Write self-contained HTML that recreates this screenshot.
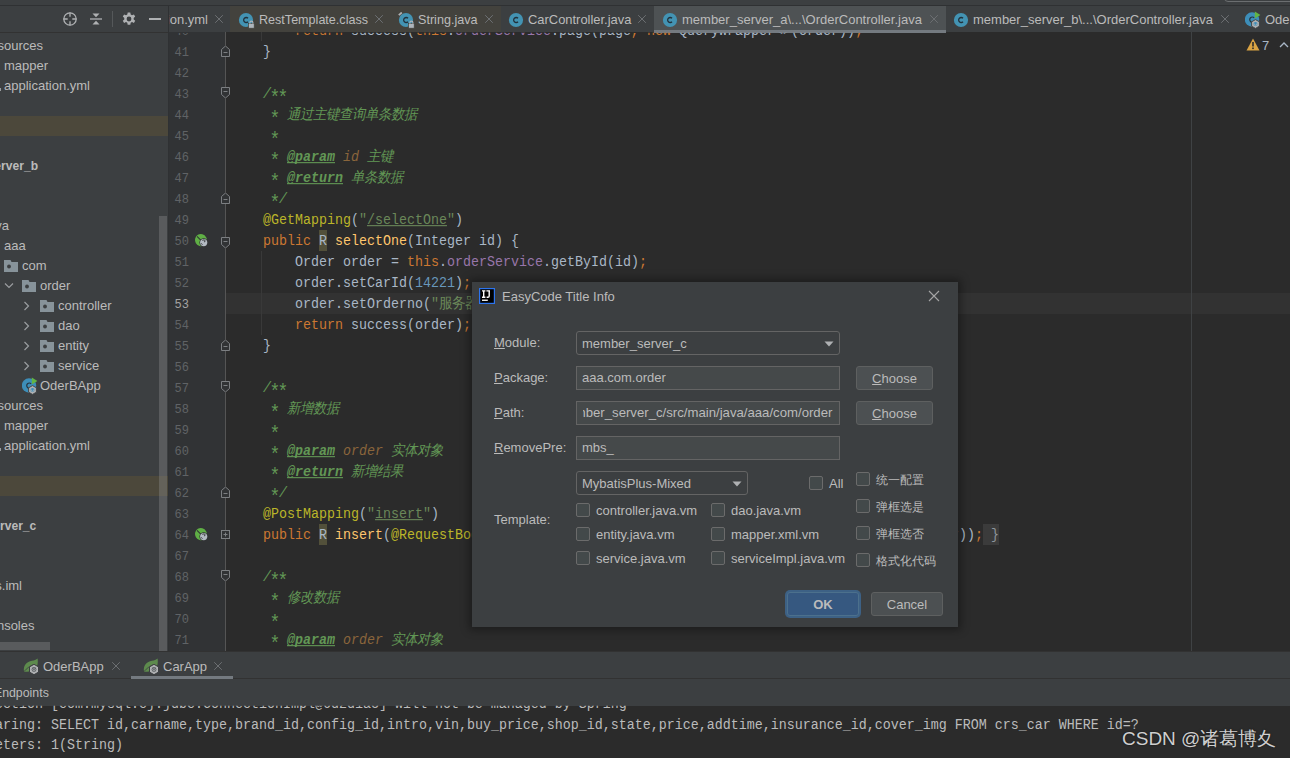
<!DOCTYPE html>
<html><head><meta charset="utf-8">
<style>
*{box-sizing:border-box}
html,body{margin:0;padding:0}
body{width:1290px;height:758px;overflow:hidden;position:relative;background:#3C3F41;font-family:"Liberation Sans",sans-serif;font-size:13px;color:#BBBBBB}
.a{position:absolute;display:block}
.t{position:absolute;white-space:pre;line-height:1}
.code{font-family:"Liberation Mono",monospace;font-size:13.333px;color:#A9B7C6;transform:scaleY(1.1);transform-origin:0 10px}
.kw{color:#CC7832}
.an{color:#BBB529}
.st{color:#6A8759}
.nu{color:#6897BB}
.fd{color:#9876AA}
.md{color:#FFC66D}
.dc{color:#629755;font-style:italic}
.tag{color:#629755;font-weight:bold;font-style:italic;text-decoration:underline;text-decoration-skip-ink:none}
.ast{display:inline-block;width:8px;text-align:center;transform:translateY(4px) scale(1.35);font-style:normal}
.pn{color:#8A653B;font-style:italic}
.ln{position:absolute;left:168px;width:21px;text-align:right;font-family:"Liberation Mono",monospace;font-size:12px;color:#606366;white-space:pre;line-height:1}
u{text-decoration:underline}
</style></head><body>
<div class="a" style="left:0px;top:0px;width:1290px;height:5px;background:#3C3F41;"></div>
<div class="a" style="left:0px;top:5px;width:1290px;height:1px;background:#2F3133;"></div>
<div class="a" style="left:0px;top:6px;width:168px;height:645px;background:#3C3F41;"></div>
<div class="a" style="left:0px;top:32px;width:168px;height:1px;background:#323232;"></div>
<svg class="a" style="left:61px;top:10px;" width="18" height="18" viewBox="0 0 18 18"><circle cx="9" cy="9" r="6.2" fill="none" stroke="#AFB1B3" stroke-width="1.3"/><path d="M9 2.5v4.2M9 11.3v4.2M2.5 9h4.2M11.3 9h4.2" stroke="#AFB1B3" stroke-width="1.3"/></svg>
<svg class="a" style="left:88px;top:11px;" width="16" height="16" viewBox="0 0 16 16"><path d="M2 8h12" stroke="#AFB1B3" stroke-width="1.3"/><path d="M4.5 2.5h7L8 6.3z M4.5 13.5h7L8 9.7z" fill="#AFB1B3"/></svg>
<div class="a" style="left:112px;top:11px;width:1px;height:16px;background:#55585A;"></div>
<svg class="a" style="left:121px;top:11px;" width="16" height="16" viewBox="0 0 16 16"><path fill="#AFB1B3" fill-rule="evenodd" d="M6.7 1.5h2.6l.4 2 1.3.7 1.9-.8 1.3 2.2-1.5 1.3v1.5l1.5 1.3-1.3 2.2-1.9-.8-1.3.7-.4 2H6.7l-.4-2-1.3-.7-1.9.8-1.3-2.2 1.5-1.3V6.9L1.8 5.6l1.3-2.2 1.9.8 1.3-.7z M8 5.6a2.4 2.4 0 1 0 0 4.8a2.4 2.4 0 1 0 0-4.8z"/></svg>
<div class="a" style="left:149px;top:18px;width:12px;height:2px;background:#AFB1B3;"></div>
<div class="a" style="left:0px;top:116px;width:168px;height:20px;background:#4C483B;"></div>
<div class="a" style="left:0px;top:476px;width:168px;height:20px;background:#4C483B;"></div>
<div class="t" style="top:39px;font-size:13px;color:#BBBBBB;right:1247px;text-align:right;">resources</div>
<div class="t" style="top:59px;font-size:13px;color:#BBBBBB;left:4px;">mapper</div>
<div class="t" style="top:79px;font-size:13px;color:#BBBBBB;left:4px;">application.yml</div>
<div class="a" style="left:0px;top:88px;width:1px;height:3px;background:#9A9DA0;"></div>
<div class="t" style="top:159px;font-size:13px;color:#BBBBBB;right:1252px;text-align:right;font-weight:bold;transform:scaleX(0.93);transform-origin:right top;">member_server_b</div>
<div class="t" style="top:219px;font-size:13px;color:#BBBBBB;right:1281px;text-align:right;">java</div>
<div class="t" style="top:239px;font-size:13px;color:#BBBBBB;left:4px;">aaa</div>
<svg class="a" style="left:4px;top:260px;" width="14" height="12" viewBox="0 0 14 12"><path d="M0 0h6.5l1 2H14v10H0z" fill="#87939A"/><circle cx="5" cy="6.5" r="1.9" fill="#3C3F41"/></svg>
<div class="t" style="top:259px;font-size:13px;color:#BBBBBB;left:22px;">com</div>
<svg class="a" style="left:4px;top:282px;" width="10" height="8" viewBox="0 0 10 8"><path d="M1 1.5l4 4 4-4" fill="none" stroke="#9A9DA0" stroke-width="1.2"/></svg>
<svg class="a" style="left:22px;top:280px;" width="14" height="12" viewBox="0 0 14 12"><path d="M0 0h6.5l1 2H14v10H0z" fill="#87939A"/><circle cx="5" cy="6.5" r="1.9" fill="#3C3F41"/></svg>
<div class="t" style="top:279px;font-size:13px;color:#BBBBBB;left:40px;">order</div>
<svg class="a" style="left:23px;top:301px;" width="8" height="10" viewBox="0 0 8 10"><path d="M1.5 1l4 4-4 4" fill="none" stroke="#9A9DA0" stroke-width="1.2"/></svg>
<svg class="a" style="left:40px;top:300px;" width="14" height="12" viewBox="0 0 14 12"><path d="M0 0h6.5l1 2H14v10H0z" fill="#87939A"/><circle cx="5" cy="6.5" r="1.9" fill="#3C3F41"/></svg>
<div class="t" style="top:299px;font-size:13px;color:#BBBBBB;left:58px;">controller</div>
<svg class="a" style="left:23px;top:321px;" width="8" height="10" viewBox="0 0 8 10"><path d="M1.5 1l4 4-4 4" fill="none" stroke="#9A9DA0" stroke-width="1.2"/></svg>
<svg class="a" style="left:40px;top:320px;" width="14" height="12" viewBox="0 0 14 12"><path d="M0 0h6.5l1 2H14v10H0z" fill="#87939A"/><circle cx="5" cy="6.5" r="1.9" fill="#3C3F41"/></svg>
<div class="t" style="top:319px;font-size:13px;color:#BBBBBB;left:58px;">dao</div>
<svg class="a" style="left:23px;top:341px;" width="8" height="10" viewBox="0 0 8 10"><path d="M1.5 1l4 4-4 4" fill="none" stroke="#9A9DA0" stroke-width="1.2"/></svg>
<svg class="a" style="left:40px;top:340px;" width="14" height="12" viewBox="0 0 14 12"><path d="M0 0h6.5l1 2H14v10H0z" fill="#87939A"/><circle cx="5" cy="6.5" r="1.9" fill="#3C3F41"/></svg>
<div class="t" style="top:339px;font-size:13px;color:#BBBBBB;left:58px;">entity</div>
<svg class="a" style="left:23px;top:361px;" width="8" height="10" viewBox="0 0 8 10"><path d="M1.5 1l4 4-4 4" fill="none" stroke="#9A9DA0" stroke-width="1.2"/></svg>
<svg class="a" style="left:40px;top:360px;" width="14" height="12" viewBox="0 0 14 12"><path d="M0 0h6.5l1 2H14v10H0z" fill="#87939A"/><circle cx="5" cy="6.5" r="1.9" fill="#3C3F41"/></svg>
<div class="t" style="top:359px;font-size:13px;color:#BBBBBB;left:58px;">service</div>
<svg class="a" style="left:22px;top:377px;" width="18" height="18" viewBox="0 0 18 18"><circle cx="7" cy="8.5" r="7.2" fill="#3D8EB9"/><path d="M9.2 6.8a2.6 2.6 0 1 0 0 3.6" fill="none" stroke="#253540" stroke-width="1.2"/><path d="M9.8 0.5l5.6 3.6-5.6 3.4z" fill="#62B543"/><path d="M10.5 8.6l3.9 2.2v4.4l-3.9 2.2-3.9-2.2v-4.4z" fill="#AFB1B3" stroke="#3C3F41" stroke-width="0.9"/><circle cx="10.5" cy="13" r="2" fill="#3D8EB9"/><path d="M9.4 12.6a1.2 1.2 0 1 0 2.2 0" fill="none" stroke="#AFB1B3" stroke-width="0.8"/></svg>
<div class="t" style="top:379px;font-size:13px;color:#BBBBBB;left:40px;">OderBApp</div>
<div class="t" style="top:399px;font-size:13px;color:#BBBBBB;right:1247px;text-align:right;">resources</div>
<div class="t" style="top:419px;font-size:13px;color:#BBBBBB;left:4px;">mapper</div>
<div class="t" style="top:439px;font-size:13px;color:#BBBBBB;left:4px;">application.yml</div>
<div class="a" style="left:0px;top:448px;width:1px;height:3px;background:#9A9DA0;"></div>
<div class="t" style="top:519px;font-size:13px;color:#BBBBBB;right:1253.5px;text-align:right;font-weight:bold;transform:scaleX(0.93);transform-origin:right top;">member_server_c</div>
<div class="t" style="top:579px;font-size:13px;color:#BBBBBB;right:1268px;text-align:right;">member_servers.iml</div>
<div class="t" style="top:619px;font-size:13px;color:#BBBBBB;right:1255.5px;text-align:right;">Scratches and Consoles</div>
<div class="a" style="left:159px;top:216px;width:8px;height:435px;background:#595B5D;"></div>
<div class="a" style="left:159px;top:476px;width:8px;height:20px;background:#64625A;"></div>
<div class="a" style="left:0px;top:642px;width:50px;height:8px;background:#595B5D;"></div>
<div class="a" style="left:168px;top:32px;width:1122px;height:619px;background:#2B2B2B;"></div>
<div class="a" style="left:168px;top:32px;width:58px;height:619px;background:#313335;"></div>
<div class="a" style="left:168px;top:6px;width:1px;height:645px;background:#2F3133;"></div>
<div class="a" style="left:168px;top:6px;width:1122px;height:26px;background:#3C3F41;"></div>
<div class="a" style="left:168px;top:6px;width:1px;height:26px;background:#2F3133;"></div>
<div class="a" style="left:230px;top:6px;width:271px;height:26px;background:#43423D;"></div>
<div class="a" style="left:654px;top:6px;width:292px;height:26px;background:#4E5254;"></div>
<div class="a" style="left:654px;top:30px;width:292px;height:3px;background:#747A80;"></div>
<div class="a" style="left:169px;top:6px;width:59px;height:26px;overflow:hidden"><div class="t" style="right:20px;top:7px;color:#BBBBBB">application.yml</div></div>
<svg class="a" style="left:213px;top:13px;" width="12" height="12" viewBox="0 0 12 12"><path d="M2.2 2.2L9.8 9.8M9.8 2.2L2.2 9.8" stroke="#6C6F72" stroke-width="1"/></svg>
<svg class="a" style="left:238px;top:12px;" width="17" height="17" viewBox="0 0 17 17"><circle cx="8" cy="8" r="7.1" fill="#4393B3"/><path d="M10 6.3a2.5 2.5 0 1 0 0 3.4" fill="none" stroke="#22303A" stroke-width="1.3"/><rect x="10.6" y="11.6" width="5.6" height="4.6" fill="#AEB5BC" stroke="#43423D" stroke-width="0.7"/><path d="M11.9 11.8v-1.2a1.5 1.5 0 0 1 3 0v1.2" fill="none" stroke="#AEB5BC" stroke-width="1.1"/></svg>
<div class="t" style="top:13px;font-size:13px;color:#BBBBBB;left:259px;transform:scaleX(0.967);transform-origin:left top;">RestTemplate.class</div>
<svg class="a" style="left:373px;top:13px;" width="12" height="12" viewBox="0 0 12 12"><path d="M2.2 2.2L9.8 9.8M9.8 2.2L2.2 9.8" stroke="#6C6F72" stroke-width="1"/></svg>
<svg class="a" style="left:398px;top:12px;" width="17" height="17" viewBox="0 0 17 17"><circle cx="8" cy="8" r="7.1" fill="#4393B3"/><path d="M10 6.3a2.5 2.5 0 1 0 0 3.4" fill="none" stroke="#22303A" stroke-width="1.3"/><rect x="10.6" y="11.6" width="5.6" height="4.6" fill="#AEB5BC" stroke="#43423D" stroke-width="0.7"/><path d="M11.9 11.8v-1.2a1.5 1.5 0 0 1 3 0v1.2" fill="none" stroke="#AEB5BC" stroke-width="1.1"/><path d="M0.8 3.2l3-2.7" stroke="#AFB1B3" stroke-width="1.8"/></svg>
<div class="t" style="top:13px;font-size:13px;color:#BBBBBB;left:418px;transform:scaleX(0.97);transform-origin:left top;">String.java</div>
<svg class="a" style="left:483px;top:13px;" width="12" height="12" viewBox="0 0 12 12"><path d="M2.2 2.2L9.8 9.8M9.8 2.2L2.2 9.8" stroke="#6C6F72" stroke-width="1"/></svg>
<svg class="a" style="left:508px;top:12px;" width="17" height="17" viewBox="0 0 17 17"><circle cx="8" cy="8" r="7.1" fill="#4393B3"/><path d="M10 6.3a2.5 2.5 0 1 0 0 3.4" fill="none" stroke="#22303A" stroke-width="1.3"/></svg>
<div class="t" style="top:13px;font-size:13px;color:#BBBBBB;left:528px;transform:scaleX(0.994);transform-origin:left top;">CarController.java</div>
<svg class="a" style="left:636px;top:13px;" width="12" height="12" viewBox="0 0 12 12"><path d="M2.2 2.2L9.8 9.8M9.8 2.2L2.2 9.8" stroke="#6C6F72" stroke-width="1"/></svg>
<svg class="a" style="left:662px;top:12px;" width="17" height="17" viewBox="0 0 17 17"><circle cx="8" cy="8" r="7.1" fill="#4393B3"/><path d="M10 6.3a2.5 2.5 0 1 0 0 3.4" fill="none" stroke="#22303A" stroke-width="1.3"/></svg>
<div class="t" style="top:13px;font-size:13px;color:#BBBBBB;left:682px;">member_server_a\...\OrderController.java</div>
<svg class="a" style="left:928px;top:13px;" width="12" height="12" viewBox="0 0 12 12"><path d="M2.2 2.2L9.8 9.8M9.8 2.2L2.2 9.8" stroke="#6C6F72" stroke-width="1"/></svg>
<svg class="a" style="left:953px;top:12px;" width="17" height="17" viewBox="0 0 17 17"><circle cx="8" cy="8" r="7.1" fill="#4393B3"/><path d="M10 6.3a2.5 2.5 0 1 0 0 3.4" fill="none" stroke="#22303A" stroke-width="1.3"/></svg>
<div class="t" style="top:13px;font-size:13px;color:#BBBBBB;left:973px;">member_server_b\...\OrderController.java</div>
<svg class="a" style="left:1219px;top:13px;" width="12" height="12" viewBox="0 0 12 12"><path d="M2.2 2.2L9.8 9.8M9.8 2.2L2.2 9.8" stroke="#6C6F72" stroke-width="1"/></svg>
<svg class="a" style="left:1245px;top:11px;" width="18" height="18" viewBox="0 0 18 18"><circle cx="7" cy="8.5" r="7.2" fill="#3D8EB9"/><path d="M9.2 6.8a2.6 2.6 0 1 0 0 3.6" fill="none" stroke="#253540" stroke-width="1.2"/><path d="M9.8 0.5l5.6 3.6-5.6 3.4z" fill="#62B543"/><path d="M10.5 8.6l3.9 2.2v4.4l-3.9 2.2-3.9-2.2v-4.4z" fill="#AFB1B3" stroke="#3C3F41" stroke-width="0.9"/><circle cx="10.5" cy="13" r="2" fill="#3D8EB9"/><path d="M9.4 12.6a1.2 1.2 0 1 0 2.2 0" fill="none" stroke="#AFB1B3" stroke-width="0.8"/></svg>
<div class="t" style="top:13px;font-size:13px;color:#BBBBBB;left:1265px;">OderBApp</div>
<div class="a" style="left:1224px;top:-10px;width:80px;height:12px;border:1px solid #6B6E70;border-radius:4px"></div>
<div class="a" style="left:1191px;top:32px;width:1px;height:619px;background:#3F4244;"></div>
<svg class="a" style="left:1246px;top:38px;" width="14" height="13" viewBox="0 0 14 13"><path d="M7 0.5L13.5 12.5H0.5z" fill="#D9A343"/><rect x="6.2" y="4" width="1.6" height="4.5" fill="#2B2B2B"/><rect x="6.2" y="9.5" width="1.6" height="1.6" fill="#2B2B2B"/></svg>
<div class="t" style="top:39px;font-size:13px;color:#A9B7C6;left:1262px;">7</div>
<svg class="a" style="left:1279px;top:41px;" width="10" height="8" viewBox="0 0 10 8"><path d="M1 6l4-4 4 4" fill="none" stroke="#A9B7C6" stroke-width="1.3"/></svg>
<div class="a" style="left:226px;top:293px;width:965px;height:21px;background:#323232;"></div>
<div class="a" style="left:1192px;top:293px;width:98px;height:21px;background:#323232;"></div>
<div class="a" style="left:225px;top:32px;width:1px;height:619px;background:#555555;"></div>
<div class="a" style="left:261px;top:32px;width:1px;height:9px;background:#393939;"></div>
<div class="a" style="left:261px;top:251px;width:1px;height:84px;background:#393939;"></div>
<div class="ln" style="top:26px;color:#606366;clip-path:inset(7px 0 0 0);">40</div>
<div class="ln" style="top:47px;color:#606366;">41</div>
<div class="ln" style="top:68px;color:#606366;">42</div>
<div class="ln" style="top:89px;color:#606366;">43</div>
<div class="ln" style="top:110px;color:#606366;">44</div>
<div class="ln" style="top:131px;color:#606366;">45</div>
<div class="ln" style="top:152px;color:#606366;">46</div>
<div class="ln" style="top:173px;color:#606366;">47</div>
<div class="ln" style="top:194px;color:#606366;">48</div>
<div class="ln" style="top:215px;color:#606366;">49</div>
<div class="ln" style="top:236px;color:#606366;">50</div>
<div class="ln" style="top:257px;color:#606366;">51</div>
<div class="ln" style="top:278px;color:#606366;">52</div>
<div class="ln" style="top:299px;color:#A4A3A3;">53</div>
<div class="ln" style="top:320px;color:#606366;">54</div>
<div class="ln" style="top:341px;color:#606366;">55</div>
<div class="ln" style="top:362px;color:#606366;">56</div>
<div class="ln" style="top:383px;color:#606366;">57</div>
<div class="ln" style="top:404px;color:#606366;">58</div>
<div class="ln" style="top:425px;color:#606366;">59</div>
<div class="ln" style="top:446px;color:#606366;">60</div>
<div class="ln" style="top:467px;color:#606366;">61</div>
<div class="ln" style="top:488px;color:#606366;">62</div>
<div class="ln" style="top:509px;color:#606366;">63</div>
<div class="ln" style="top:530px;color:#606366;">64</div>
<div class="ln" style="top:551px;color:#606366;">67</div>
<div class="ln" style="top:572px;color:#606366;">68</div>
<div class="ln" style="top:593px;color:#606366;">69</div>
<div class="ln" style="top:614px;color:#606366;">70</div>
<div class="ln" style="top:635px;color:#606366;">71</div>
<svg class="a" style="left:221px;top:46px;" width="9" height="11" viewBox="0 0 9 11"><path d="M0.5 10.5h8v-7l-4-3.5-4 3.5z" fill="#313335" stroke="#7C7F82"/><path d="M2.5 6.5h4" stroke="#7C7F82"/></svg>
<svg class="a" style="left:221px;top:87px;" width="9" height="11" viewBox="0 0 9 11"><path d="M0.5 0.5h8v7l-4 3.5-4-3.5z" fill="#313335" stroke="#7C7F82"/><path d="M2.5 4.5h4" stroke="#7C7F82"/></svg>
<svg class="a" style="left:221px;top:193px;" width="9" height="11" viewBox="0 0 9 11"><path d="M0.5 10.5h8v-7l-4-3.5-4 3.5z" fill="#313335" stroke="#7C7F82"/><path d="M2.5 6.5h4" stroke="#7C7F82"/></svg>
<svg class="a" style="left:221px;top:237px;" width="9" height="11" viewBox="0 0 9 11"><path d="M0.5 0.5h8v7l-4 3.5-4-3.5z" fill="#313335" stroke="#7C7F82"/><path d="M2.5 4.5h4" stroke="#7C7F82"/></svg>
<svg class="a" style="left:221px;top:340px;" width="9" height="11" viewBox="0 0 9 11"><path d="M0.5 10.5h8v-7l-4-3.5-4 3.5z" fill="#313335" stroke="#7C7F82"/><path d="M2.5 6.5h4" stroke="#7C7F82"/></svg>
<svg class="a" style="left:221px;top:381px;" width="9" height="11" viewBox="0 0 9 11"><path d="M0.5 0.5h8v7l-4 3.5-4-3.5z" fill="#313335" stroke="#7C7F82"/><path d="M2.5 4.5h4" stroke="#7C7F82"/></svg>
<svg class="a" style="left:221px;top:487px;" width="9" height="11" viewBox="0 0 9 11"><path d="M0.5 10.5h8v-7l-4-3.5-4 3.5z" fill="#313335" stroke="#7C7F82"/><path d="M2.5 6.5h4" stroke="#7C7F82"/></svg>
<svg class="a" style="left:221px;top:530px;" width="9" height="11" viewBox="0 0 9 11"><rect x="0.5" y="0.5" width="8" height="8" fill="#313335" stroke="#7C7F82"/><path d="M2.5 4.5h4M4.5 2.5v4" stroke="#7C7F82"/></svg>
<svg class="a" style="left:221px;top:570px;" width="9" height="11" viewBox="0 0 9 11"><path d="M0.5 0.5h8v7l-4 3.5-4-3.5z" fill="#313335" stroke="#7C7F82"/><path d="M2.5 4.5h4" stroke="#7C7F82"/></svg>
<svg class="a" style="left:195px;top:233.5px;" width="14" height="14" viewBox="0 0 14 14"><ellipse cx="6" cy="6.2" rx="5.9" ry="6.2" fill="#5FAF45" transform="rotate(-30 6 6.2)"/><path d="M2 2.3L6 6.3" stroke="#313335" stroke-width="1.1"/><circle cx="8.7" cy="8.6" r="4.3" fill="#313335"/><circle cx="8.7" cy="8.6" r="3.6" fill="#B3BAC2"/><path d="M7.4 6.4c.9-.6 2-.5 2.7.2l-.6 1.6M6.2 9.3l1.2 1.4" fill="none" stroke="#313335" stroke-width="1"/></svg>
<svg class="a" style="left:195px;top:527.5px;" width="14" height="14" viewBox="0 0 14 14"><ellipse cx="6" cy="6.2" rx="5.9" ry="6.2" fill="#5FAF45" transform="rotate(-30 6 6.2)"/><path d="M2 2.3L6 6.3" stroke="#313335" stroke-width="1.1"/><circle cx="8.7" cy="8.6" r="4.3" fill="#313335"/><circle cx="8.7" cy="8.6" r="3.6" fill="#B3BAC2"/><path d="M7.4 6.4c.9-.6 2-.5 2.7.2l-.6 1.6M6.2 9.3l1.2 1.4" fill="none" stroke="#313335" stroke-width="1"/></svg>
<div class="t code" style="left:231px;top:25px;clip-path:inset(8px 0 0 0);">        <span class="kw">return</span> success(<span class="kw">this</span>.<span class="fd">orderService</span>.page(page<span class="kw">,</span> <span class="kw">new</span> QueryWrapper&lt;&gt;(order))<span class="kw">;</span></div>
<div class="t code" style="left:231px;top:46px;">    }</div>
<div class="t code" style="left:231px;top:88px;">    <span class="dc">/<span class="ast">*</span><span class="ast">*</span></span></div>
<div class="t code" style="left:231px;top:109px;">     <span class="dc"><span class="ast">*</span> 通过主键查询单条数据</span></div>
<div class="t code" style="left:231px;top:130px;">     <span class="dc"><span class="ast">*</span></span></div>
<div class="t code" style="left:231px;top:151px;">     <span class="dc"><span class="ast">*</span> </span><span class="tag">@param</span><span class="dc"> </span><span class="pn">id</span><span class="dc"> 主键</span></div>
<div class="t code" style="left:231px;top:172px;">     <span class="dc"><span class="ast">*</span> </span><span class="tag">@return</span><span class="dc"> 单条数据</span></div>
<div class="t code" style="left:231px;top:193px;">     <span class="dc"><span class="ast">*</span>/</span></div>
<div class="t code" style="left:231px;top:214px;">    <span class="an">@GetMapping</span>(<span class="st">"<u>/selectOne</u>"</span>)</div>
<div class="a" style="left:319px;top:230px;width:8px;height:21px;background:#52503A;"></div>
<div class="a" style="left:319px;top:524px;width:8px;height:21px;background:#52503A;"></div>
<div class="a" style="left:983px;top:524px;width:16px;height:21px;background:#3B3B3B;"></div>
<div class="t code" style="left:231px;top:235px;">    <span class="kw">public</span> <span>R</span> <span class="md">selectOne</span>(Integer id) {</div>
<div class="t code" style="left:231px;top:256px;">        Order order = <span class="kw">this</span>.<span class="fd">orderService</span>.getById(id)<span class="kw">;</span></div>
<div class="t code" style="left:231px;top:277px;">        order.setCarId(<span class="nu">14221</span>)<span class="kw">;</span></div>
<div class="t code" style="left:231px;top:298px;">        order.setOrderno(<span class="st">"服务器</span></div>
<div class="t code" style="left:231px;top:319px;">        <span class="kw">return</span> success(order)<span class="kw">;</span></div>
<div class="t code" style="left:231px;top:340px;">    }</div>
<div class="t code" style="left:231px;top:382px;">    <span class="dc">/<span class="ast">*</span><span class="ast">*</span></span></div>
<div class="t code" style="left:231px;top:403px;">     <span class="dc"><span class="ast">*</span> 新增数据</span></div>
<div class="t code" style="left:231px;top:424px;">     <span class="dc"><span class="ast">*</span></span></div>
<div class="t code" style="left:231px;top:445px;">     <span class="dc"><span class="ast">*</span> </span><span class="tag">@param</span><span class="dc"> </span><span class="pn">order</span><span class="dc"> 实体对象</span></div>
<div class="t code" style="left:231px;top:466px;">     <span class="dc"><span class="ast">*</span> </span><span class="tag">@return</span><span class="dc"> 新增结果</span></div>
<div class="t code" style="left:231px;top:487px;">     <span class="dc"><span class="ast">*</span>/</span></div>
<div class="t code" style="left:231px;top:508px;">    <span class="an">@PostMapping</span>(<span class="st">"<u>insert</u>"</span>)</div>
<div class="t code" style="left:231px;top:529px;">    <span class="kw">public</span> R <span class="md">insert</span>(<span class="an">@RequestBody</span> Order order) { <span class="kw">return</span> success(<span class="kw">this</span>.<span class="fd">orderService</span>.save(order))<span class="kw">;</span> <span style="color:#8E969C">}</span></div>
<div class="t code" style="left:231px;top:571px;">    <span class="dc">/<span class="ast">*</span><span class="ast">*</span></span></div>
<div class="t code" style="left:231px;top:592px;">     <span class="dc"><span class="ast">*</span> 修改数据</span></div>
<div class="t code" style="left:231px;top:613px;">     <span class="dc"><span class="ast">*</span></span></div>
<div class="t code" style="left:231px;top:634px;">     <span class="dc"><span class="ast">*</span> </span><span class="tag">@param</span><span class="dc"> </span><span class="pn">order</span><span class="dc"> 实体对象</span></div>
<div class="a" style="left:0px;top:651px;width:1290px;height:1px;background:#323232;"></div>
<div class="a" style="left:0px;top:652px;width:1290px;height:26px;background:#3C3F41;"></div>
<div class="a" style="left:0px;top:678px;width:1290px;height:1px;background:#323232;"></div>
<div class="a" style="left:0px;top:679px;width:1290px;height:27px;background:#3C3F41;"></div>
<div class="a" style="left:0px;top:706px;width:1290px;height:52px;background:#2B2B2B;"></div>
<svg class="a" style="left:23px;top:658px;" width="17" height="16" viewBox="0 0 17 16"><path d="M1 13.5C0 8 3.5 3.5 9 2.8c2.2-.3 4.2-1 5.6-2.3c.6 3.8.2 8.8-3.2 11.3C8.3 14 4 14 1 13.5z" fill="#5D8A4D"/><path d="M1.2 13.3c2.5-3 5.5-5 9-6.5" fill="none" stroke="#3C3F41" stroke-width="0.8"/><path d="M11 6.3l4.5 2.6v5.2L11 16.7l-4.5-2.6V8.9z" fill="#AFB1B3" stroke="#3C3F41" stroke-width="1"/><circle cx="11" cy="11.5" r="2.4" fill="#5B5F62"/><path d="M9.9 10.9a1.3 1.3 0 1 0 2.2 0M11 9.9v1.4" fill="none" stroke="#AFB1B3" stroke-width="0.8"/></svg>
<div class="t" style="top:660px;font-size:13px;color:#BBBBBB;left:43px;">OderBApp</div>
<svg class="a" style="left:110px;top:660px;" width="12" height="12" viewBox="0 0 12 12"><path d="M2.2 2.2L9.8 9.8M9.8 2.2L2.2 9.8" stroke="#6C6F72" stroke-width="1"/></svg>
<svg class="a" style="left:143px;top:658px;" width="17" height="16" viewBox="0 0 17 16"><path d="M1 13.5C0 8 3.5 3.5 9 2.8c2.2-.3 4.2-1 5.6-2.3c.6 3.8.2 8.8-3.2 11.3C8.3 14 4 14 1 13.5z" fill="#5D8A4D"/><path d="M1.2 13.3c2.5-3 5.5-5 9-6.5" fill="none" stroke="#3C3F41" stroke-width="0.8"/><path d="M11 6.3l4.5 2.6v5.2L11 16.7l-4.5-2.6V8.9z" fill="#AFB1B3" stroke="#3C3F41" stroke-width="1"/><circle cx="11" cy="11.5" r="2.4" fill="#5B5F62"/><path d="M9.9 10.9a1.3 1.3 0 1 0 2.2 0M11 9.9v1.4" fill="none" stroke="#AFB1B3" stroke-width="0.8"/></svg>
<div class="t" style="top:660px;font-size:13px;color:#BBBBBB;left:163px;">CarApp</div>
<svg class="a" style="left:212px;top:660px;" width="12" height="12" viewBox="0 0 12 12"><path d="M2.2 2.2L9.8 9.8M9.8 2.2L2.2 9.8" stroke="#6C6F72" stroke-width="1"/></svg>
<div class="a" style="left:131px;top:676px;width:102px;height:3px;background:#747A80;"></div>
<div class="t" style="top:686px;font-size:13px;color:#BBBBBB;right:1241px;text-align:right;transform:scaleX(0.95);transform-origin:right top;">Endpoints</div>
<div class="t code" style="left:-77px;top:698px;color:#BBBBBB;clip-path:inset(8px 0 0 0);">JDBC Connection [com.mysql.cj.jdbc.ConnectionImpl@6d2d1a3] will not be managed by Spring</div>
<div class="t code" style="left:-37px;top:719px;color:#BBBBBB;">Preparing: SELECT id,carname,type,brand_id,config_id,intro,vin,buy_price,shop_id,state,price,addtime,insurance_id,cover_img FROM crs_car WHERE id=?</div>
<div class="t code" style="left:-45px;top:739px;color:#BBBBBB;">Parameters: 1(String)</div>
<div class="t" style="top:729px;font-size:19px;color:#CFCFCF;left:1122px;text-shadow:0 0 2px rgba(0,0,0,0.6)">CSDN @诸葛博夊</div>
<div class="a" style="left:472px;top:282px;width:486px;height:345px;background:#3C3F41;box-shadow:0 0 8px 3px rgba(0,0,0,0.35)"></div>
<svg class="a" style="left:479px;top:288px;" width="16" height="16" viewBox="0 0 16 16"><rect x="0.6" y="0.6" width="14.8" height="14.8" fill="#000" stroke="#2C74EE" stroke-width="1.2"/><path d="M3 2.9h3.4M4.7 2.9v6.3M3 9.2h3.4M7.4 2.9h3.6M10.2 2.9v5.2c0 .9-.6 1.2-1.3 1.2H7.6" fill="none" stroke="#fff" stroke-width="1.4"/><rect x="3" y="11.6" width="5.8" height="1.3" fill="#fff"/></svg>
<div class="t" style="top:290px;font-size:13px;color:#BBBBBB;left:502px;">EasyCode Title Info</div>
<svg class="a" style="left:928px;top:290px;" width="12" height="12" viewBox="0 0 12 12"><path d="M1 1l10 10M11 1L1 11" stroke="#A6A6A6" stroke-width="1.1"/></svg>
<div class="t" style="top:336px;font-size:13px;color:#BBBBBB;left:494px;"><u>M</u>odule:</div>
<div class="t" style="top:371px;font-size:13px;color:#BBBBBB;left:494px;"><u>P</u>ackage:</div>
<div class="t" style="top:406px;font-size:13px;color:#BBBBBB;left:494px;"><u>P</u>ath:</div>
<div class="t" style="top:441px;font-size:13px;color:#BBBBBB;left:494px;"><u>R</u>emovePre:</div>
<div class="t" style="top:513px;font-size:13px;color:#BBBBBB;left:494px;">Template:</div>
<div class="a" style="left:576px;top:331px;width:264px;height:24px;background:#3C3F41;border:1px solid #646464;border-radius:3px"></div>
<div class="t" style="top:337px;font-size:13px;color:#BBBBBB;left:582px;">member_server_c</div>
<svg class="a" style="left:823.5px;top:340.5px;" width="10" height="6" viewBox="0 0 10 6"><path d="M0.5 0.5h9L5 5.5z" fill="#AFB1B3"/></svg>
<div class="a" style="left:576px;top:366px;width:264px;height:24px;background:#45494A;border:1px solid #646464;border-radius:0px"></div>
<div class="t" style="top:371px;font-size:13px;color:#BBBBBB;left:582px;">aaa.com.order</div>
<div class="a" style="left:576px;top:401px;width:264px;height:24px;background:#45494A;border:1px solid #646464;border-radius:0px"></div>
<div class="a" style="left:583px;top:402px;width:256px;height:22px;overflow:hidden"><div class="t" style="right:7px;top:4px;color:#BBBBBB;transform:scaleX(1.013);transform-origin:right top">member_server_c/src/main/java/aaa/com/order</div></div>
<div class="a" style="left:576px;top:436px;width:264px;height:24px;background:#45494A;border:1px solid #646464;border-radius:0px"></div>
<div class="t" style="top:441px;font-size:13px;color:#BBBBBB;left:582px;">mbs_</div>
<div class="a" style="left:576px;top:471px;width:172px;height:24px;background:#3C3F41;border:1px solid #646464;border-radius:3px"></div>
<div class="t" style="top:477px;font-size:13px;color:#BBBBBB;left:582px;">MybatisPlus-Mixed</div>
<svg class="a" style="left:731.5px;top:480.5px;" width="10" height="6" viewBox="0 0 10 6"><path d="M0.5 0.5h9L5 5.5z" fill="#AFB1B3"/></svg>
<div class="a" style="left:856px;top:366px;width:77px;height:24px;background:#4C5052;border:1px solid #5E6060;border-radius:3px"></div>
<div class="t" style="left:856px;width:77px;text-align:center;top:372px;color:#BBBBBB;"><u>C</u>hoose</div>
<div class="a" style="left:856px;top:401px;width:77px;height:24px;background:#4C5052;border:1px solid #5E6060;border-radius:3px"></div>
<div class="t" style="left:856px;width:77px;text-align:center;top:407px;color:#BBBBBB;"><u>C</u>hoose</div>
<div class="a" style="left:809px;top:476px;width:14px;height:14px;background:#43494A;border:1px solid #6B6B6B;border-radius:2px"></div>
<div class="t" style="top:477px;font-size:13px;color:#BBBBBB;left:829px;">All</div>
<div class="a" style="left:856px;top:472px;width:14px;height:14px;background:#43494A;border:1px solid #6B6B6B;border-radius:2px"></div>
<div class="t" style="top:474px;font-size:12px;color:#BBBBBB;left:876px;">统一配置</div>
<div class="a" style="left:856px;top:499px;width:14px;height:14px;background:#43494A;border:1px solid #6B6B6B;border-radius:2px"></div>
<div class="t" style="top:501px;font-size:12px;color:#BBBBBB;left:876px;">弹框选是</div>
<div class="a" style="left:856px;top:526px;width:14px;height:14px;background:#43494A;border:1px solid #6B6B6B;border-radius:2px"></div>
<div class="t" style="top:528px;font-size:12px;color:#BBBBBB;left:876px;">弹框选否</div>
<div class="a" style="left:856px;top:553px;width:14px;height:14px;background:#43494A;border:1px solid #6B6B6B;border-radius:2px"></div>
<div class="t" style="top:555px;font-size:12px;color:#BBBBBB;left:876px;">格式化代码</div>
<div class="a" style="left:576px;top:503px;width:14px;height:14px;background:#43494A;border:1px solid #6B6B6B;border-radius:2px"></div>
<div class="t" style="top:504px;font-size:13px;color:#BBBBBB;left:596px;">controller.java.vm</div>
<div class="a" style="left:711px;top:503px;width:14px;height:14px;background:#43494A;border:1px solid #6B6B6B;border-radius:2px"></div>
<div class="t" style="top:504px;font-size:13px;color:#BBBBBB;left:731px;">dao.java.vm</div>
<div class="a" style="left:576px;top:527px;width:14px;height:14px;background:#43494A;border:1px solid #6B6B6B;border-radius:2px"></div>
<div class="t" style="top:528px;font-size:13px;color:#BBBBBB;left:596px;">entity.java.vm</div>
<div class="a" style="left:711px;top:527px;width:14px;height:14px;background:#43494A;border:1px solid #6B6B6B;border-radius:2px"></div>
<div class="t" style="top:528px;font-size:13px;color:#BBBBBB;left:731px;">mapper.xml.vm</div>
<div class="a" style="left:576px;top:551px;width:14px;height:14px;background:#43494A;border:1px solid #6B6B6B;border-radius:2px"></div>
<div class="t" style="top:552px;font-size:13px;color:#BBBBBB;left:596px;">service.java.vm</div>
<div class="a" style="left:711px;top:551px;width:14px;height:14px;background:#43494A;border:1px solid #6B6B6B;border-radius:2px"></div>
<div class="t" style="top:552px;font-size:13px;color:#BBBBBB;left:731px;">serviceImpl.java.vm</div>
<div class="a" style="left:787px;top:592px;width:72px;height:24px;background:#365880;border:1px solid #4C708C;border-radius:3px;box-shadow:0 0 0 2px #3D6185"></div>
<div class="t" style="left:787px;width:72px;text-align:center;top:598px;color:#BBBBBB;font-weight:bold;">OK</div>
<div class="a" style="left:871px;top:592px;width:72px;height:24px;background:#4C5052;border:1px solid #5E6060;border-radius:3px"></div>
<div class="t" style="left:871px;width:72px;text-align:center;top:598px;color:#BBBBBB;">Cancel</div>
</body></html>
